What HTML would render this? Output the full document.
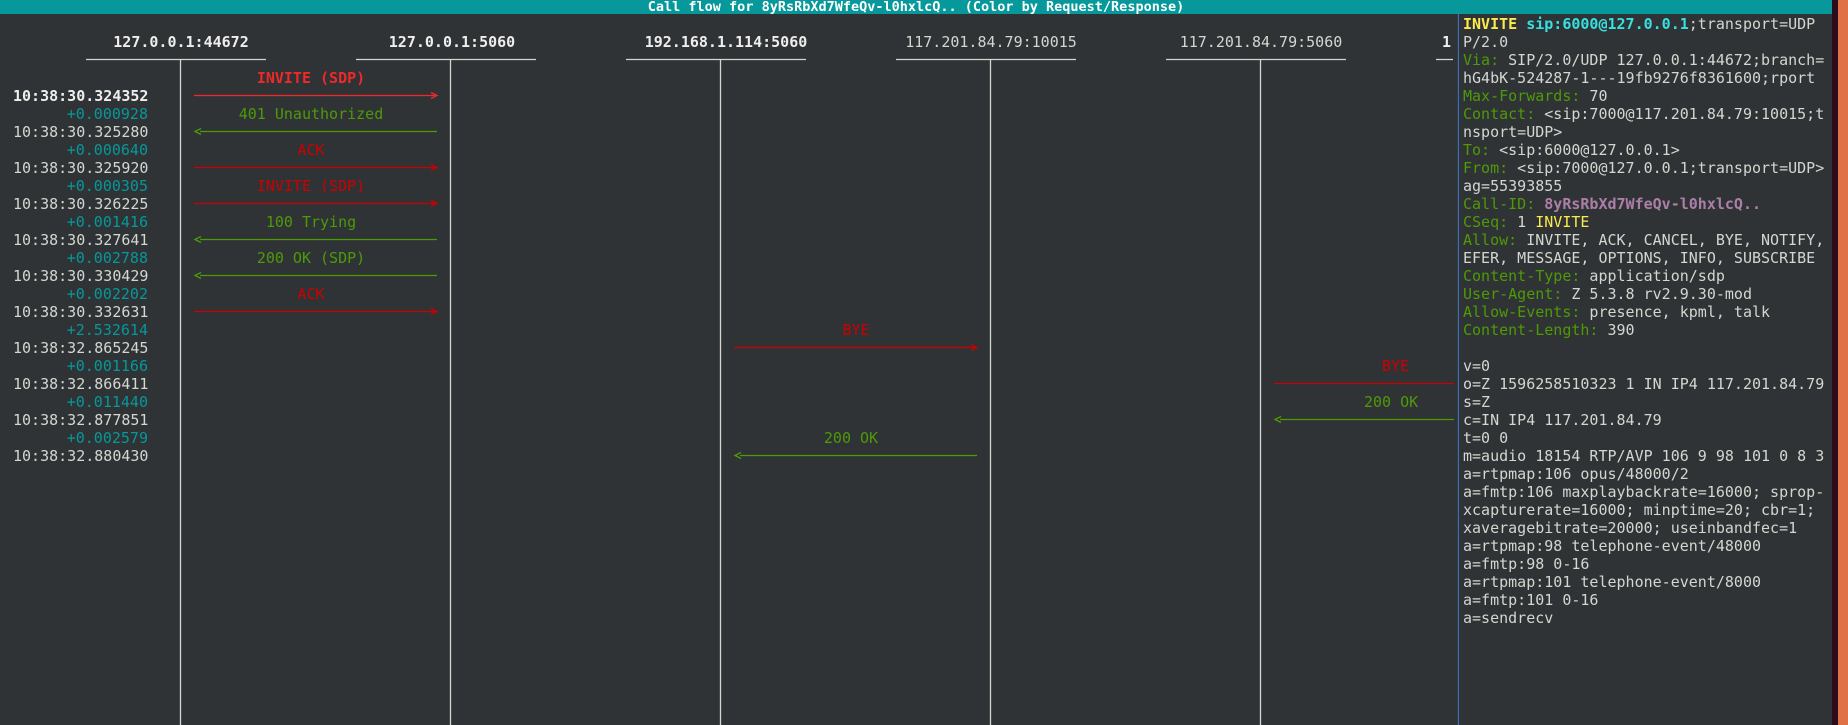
<!DOCTYPE html>
<html><head><meta charset="utf-8"><style>
*{margin:0;padding:0}
body{width:1848px;height:725px;background:#2f3336;position:relative;overflow:hidden;font-family:"DejaVu Sans Mono","Liberation Mono",monospace;font-size:15px;line-height:18px;color:#d3d7cf}
.t{position:absolute;white-space:pre;height:18px}
.c{text-align:center;width:300px}
.b{font-weight:bold}
.w{color:#eeeeec}
.g{color:#4e9a06}
.cy{color:#06989a}
.r{color:#cc0000}
.rb{color:#ef2929;font-weight:bold}
.y{color:#fce94f;font-weight:bold}
.ci{color:#34e2e2;font-weight:bold}
.p{color:#ad7fa8;font-weight:bold}
.ts{width:135px;left:13px;text-align:right}
</style></head><body>
<div style="position:absolute;left:0;top:0;width:1832px;height:14px;background:#06989a"></div>
<div class="b" style="position:absolute;left:0;top:0;width:1832px;height:14px;text-align:center;font-size:13.5px;line-height:14px;color:#fff;white-space:pre">Call flow for 8yRsRbXd7WfeQv-l0hxlcQ.. (Color by Request/Response)</div>
<div style="position:absolute;left:1832px;top:0;width:6px;height:725px;background:#2c0b1f"></div>
<div style="position:absolute;left:1838px;top:0;width:10px;height:725px;background:#e07046"></div>

<svg style="position:absolute;left:0;top:0" width="1848" height="725">
<g stroke="#d3d7cf" stroke-width="1.3">
<line x1="86" y1="59.5" x2="266" y2="59.5"/><line x1="356" y1="59.5" x2="536" y2="59.5"/>
<line x1="626" y1="59.5" x2="806" y2="59.5"/><line x1="896" y1="59.5" x2="1076" y2="59.5"/>
<line x1="1166" y1="59.5" x2="1346" y2="59.5"/><line x1="1436" y1="59.5" x2="1453" y2="59.5"/>
<line x1="180.5" y1="60" x2="180.5" y2="725"/><line x1="450.5" y1="60" x2="450.5" y2="725"/>
<line x1="720.5" y1="60" x2="720.5" y2="725"/><line x1="990.5" y1="60" x2="990.5" y2="725"/>
<line x1="1260.5" y1="60" x2="1260.5" y2="725"/>
</g>
<line x1="1458.5" y1="14" x2="1458.5" y2="725" stroke="#3c6eb4" stroke-width="1.3"/>
<g fill="none" stroke-width="1.3">
<g stroke="#ef2929"><line x1="194" y1="95.5" x2="436" y2="95.5"/><path d="M431 92.5 L437 95.5 L431 98.5"/></g>
<g stroke="#4e9a06"><line x1="200" y1="131.5" x2="437" y2="131.5"/><path d="M201 128.5 L195 131.5 L201 134.5"/></g>
<g stroke="#cc0000"><line x1="194" y1="167.5" x2="436" y2="167.5"/><path d="M431 164.5 L437 167.5 L431 170.5"/></g>
<g stroke="#cc0000"><line x1="194" y1="203.5" x2="436" y2="203.5"/><path d="M431 200.5 L437 203.5 L431 206.5"/></g>
<g stroke="#4e9a06"><line x1="200" y1="239.5" x2="437" y2="239.5"/><path d="M201 236.5 L195 239.5 L201 242.5"/></g>
<g stroke="#4e9a06"><line x1="200" y1="275.5" x2="437" y2="275.5"/><path d="M201 272.5 L195 275.5 L201 278.5"/></g>
<g stroke="#cc0000"><line x1="194" y1="311.5" x2="436" y2="311.5"/><path d="M431 308.5 L437 311.5 L431 314.5"/></g>
<g stroke="#cc0000"><line x1="734" y1="347.5" x2="976" y2="347.5"/><path d="M971 344.5 L977 347.5 L971 350.5"/></g>
<g stroke="#cc0000"><line x1="1274" y1="383.5" x2="1454" y2="383.5"/></g>
<g stroke="#4e9a06"><line x1="1280" y1="419.5" x2="1454" y2="419.5"/><path d="M1281 416.5 L1275 419.5 L1281 422.5"/></g>
<g stroke="#4e9a06"><line x1="740" y1="455.5" x2="977" y2="455.5"/><path d="M741 452.5 L735 455.5 L741 458.5"/></g>
</g>
</svg>

<div class="t c b w" style="left:31px;top:33px">127.0.0.1:44672</div>
<div class="t c b w" style="left:302px;top:33px">127.0.0.1:5060</div>
<div class="t c b w" style="left:576px;top:33px">192.168.1.114:5060</div>
<div class="t c" style="left:841px;top:33px">117.201.84.79:10015</div>
<div class="t c" style="left:1111px;top:33px">117.201.84.79:5060</div>

<div class="t c rb" style="left:161px;top:69px">INVITE (SDP)</div>
<div class="t c g" style="left:161px;top:105px">401 Unauthorized</div>
<div class="t c r" style="left:161px;top:141px">ACK</div>
<div class="t c r" style="left:161px;top:177px">INVITE (SDP)</div>
<div class="t c g" style="left:161px;top:213px">100 Trying</div>
<div class="t c g" style="left:161px;top:249px">200 OK (SDP)</div>
<div class="t c r" style="left:161px;top:285px">ACK</div>
<div class="t c r" style="left:706px;top:321px">BYE</div>
<div class="t r" style="left:1382px;top:357px">BYE</div>
<div class="t g" style="left:1364px;top:393px">200 OK</div>
<div class="t c g" style="left:701px;top:429px">200 OK</div>

<div class="t ts b w" style="top:87px">10:38:30.324352</div>
<div class="t ts cy" style="top:105px">+0.000928</div>
<div class="t ts" style="top:123px">10:38:30.325280</div>
<div class="t ts cy" style="top:141px">+0.000640</div>
<div class="t ts" style="top:159px">10:38:30.325920</div>
<div class="t ts cy" style="top:177px">+0.000305</div>
<div class="t ts" style="top:195px">10:38:30.326225</div>
<div class="t ts cy" style="top:213px">+0.001416</div>
<div class="t ts" style="top:231px">10:38:30.327641</div>
<div class="t ts cy" style="top:249px">+0.002788</div>
<div class="t ts" style="top:267px">10:38:30.330429</div>
<div class="t ts cy" style="top:285px">+0.002202</div>
<div class="t ts" style="top:303px">10:38:30.332631</div>
<div class="t ts cy" style="top:321px">+2.532614</div>
<div class="t ts" style="top:339px">10:38:32.865245</div>
<div class="t ts cy" style="top:357px">+0.001166</div>
<div class="t ts" style="top:375px">10:38:32.866411</div>
<div class="t ts cy" style="top:393px">+0.011440</div>
<div class="t ts" style="top:411px">10:38:32.877851</div>
<div class="t ts cy" style="top:429px">+0.002579</div>
<div class="t ts" style="top:447px">10:38:32.880430</div>

<div style="position:absolute;left:1459px;top:15px;width:373px;height:710px;background:#2f3336"></div>
<div class="t b w" style="left:1442px;top:33px">1</div>
<div class="t" style="left:1463px;top:15px;line-height:18px"><span class="y">INVITE</span> <span class="ci">sip:6000@127.0.0.1</span>;transport=UDP
P/2.0
<span class="g">Via:</span> SIP/2.0/UDP 127.0.0.1:44672;branch=
hG4bK-524287-1---19fb9276f8361600;rport
<span class="g">Max-Forwards:</span> 70
<span class="g">Contact:</span> &lt;sip:7000@117.201.84.79:10015;t
nsport=UDP&gt;
<span class="g">To:</span> &lt;sip:6000@127.0.0.1&gt;
<span class="g">From:</span> &lt;sip:7000@127.0.0.1;transport=UDP&gt;
ag=55393855
<span class="g">Call-ID:</span> <span class="p">8yRsRbXd7WfeQv-l0hxlcQ..</span>
<span class="g">CSeq:</span> 1 <span style="color:#fce94f">INVITE</span>
<span class="g">Allow:</span> INVITE, ACK, CANCEL, BYE, NOTIFY,
EFER, MESSAGE, OPTIONS, INFO, SUBSCRIBE
<span class="g">Content-Type:</span> application/sdp
<span class="g">User-Agent:</span> Z 5.3.8 rv2.9.30-mod
<span class="g">Allow-Events:</span> presence, kpml, talk
<span class="g">Content-Length:</span> 390

v=0
o=Z 1596258510323 1 IN IP4 117.201.84.79
s=Z
c=IN IP4 117.201.84.79
t=0 0
m=audio 18154 RTP/AVP 106 9 98 101 0 8 3
a=rtpmap:106 opus/48000/2
a=fmtp:106 maxplaybackrate=16000; sprop-
xcapturerate=16000; minptime=20; cbr=1;
xaveragebitrate=20000; useinbandfec=1
a=rtpmap:98 telephone-event/48000
a=fmtp:98 0-16
a=rtpmap:101 telephone-event/8000
a=fmtp:101 0-16
a=sendrecv</div>
</body></html>
